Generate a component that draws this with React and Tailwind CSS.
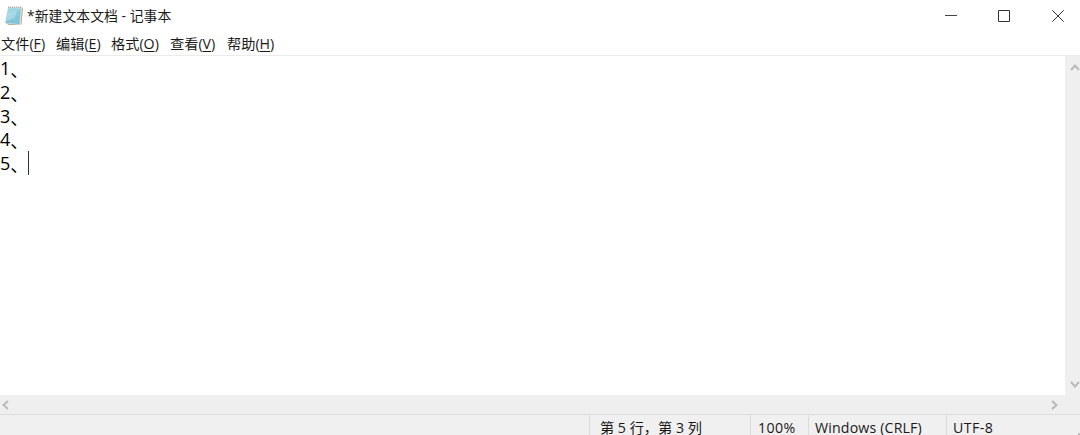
import React from 'react';

const menus = [
    { label: '文件', hotkey: 'F', width: 'w-[55px]' },
    { label: '编辑', hotkey: 'E', width: 'w-[55px]' },
    { label: '格式', hotkey: 'O', width: 'w-[59px]' },
    { label: '查看', hotkey: 'V', width: 'w-[57px]' },
    { label: '帮助', hotkey: 'H', width: 'w-[57px]' },
];

const lines = ['1', '2', '3', '4', '5'];

const NotepadIcon = () => (
    <svg width="20" height="22" viewBox="0 0 20 22" fill="none" className="shrink-0">
        <defs>
            <linearGradient id="cover" x1="4" y1="3" x2="14" y2="19" gradientUnits="userSpaceOnUse">
                <stop stopColor="#a9dbe8" />
                <stop offset="0.5" stopColor="#8bcade" />
                <stop offset="1" stopColor="#7dbdd2" />
            </linearGradient>
        </defs>
        <path d="M17.5 2.5L19 3L17.5 19.5L5 20L2 18.5Z" fill="#b9a78a" />
        <path d="M4 2L18 2.5L16.5 19.5L2 18.5Z" fill="#e4e8e4" />
        <path d="M4 3L17 3.5L15.4 19L1.2 18Z" fill="url(#cover)" />
        <path d="M4 8L13 5L11 13L2 16Z" fill="#c3e9f1" opacity="0.45" />
        <path d="M4.2 2.3H18" stroke="#9ba3a1" strokeWidth="1.4" strokeDasharray="1 1" />
    </svg>
);

const Chevron = ({ d, width, height }) => (
    <svg width={width} height={height} viewBox={`0 0 ${width} ${height}`} fill="none" className="block shrink-0">
        <path d={d} stroke="#b9b9b9" strokeWidth="2" />
    </svg>
);

const TitleBar = () => (
    <header className="flex h-8 shrink-0 items-center justify-between pl-1">
        <div className="flex items-center gap-[3px]">
            <NotepadIcon />
            <h1 className="whitespace-pre text-[13.9px] leading-5">*新建文本文档 - 记事本</h1>
        </div>
        <div className="flex h-full items-center">
            <button aria-label="最小化" className="w-[53px]">
                <svg width="12" height="12" viewBox="0 0 12 12"><path d="M0 5.5H12" stroke="#444" /></svg>
            </button>
            <button aria-label="最大化" className="w-[54px]">
                <svg width="12" height="12" viewBox="0 0 12 12"><path d="M0.5 0.5H11.5V11.5H0.5Z" stroke="#333" fill="none" /></svg>
            </button>
            <button aria-label="关闭" className="w-7">
                <svg width="12" height="12" viewBox="0 0 12 12"><path d="M0.3 0.3L11.7 11.7M11.7 0.3L0.3 11.7" stroke="#333" /></svg>
            </button>
        </div>
    </header>
);

const MenuBar = () => (
    <nav className="flex h-6 shrink-0 items-center border-b border-[#ebebeb] pl-px text-[14.2px] leading-5">
        {menus.map(({ label, hotkey, width }) => (
            <span key={hotkey} className={`shrink-0 whitespace-nowrap ${width}`}>
                {label}(<span className="underline underline-offset-2">{hotkey}</span>)
            </span>
        ))}
    </nav>
);

const Editor = () => (
    <div className="flex min-h-0 flex-1">
        <main className="flex-1 pt-px text-[18px] leading-[23.8px] text-black">
            {lines.map((line, index) => (
                <div key={line} className="flex h-[23.8px] items-start">
                    <span>{line}</span>
                    <span className="pt-0.5">、</span>
                    {index === lines.length - 1 && <span className="-mt-px h-6 w-px bg-[#333]" />}
                </div>
            ))}
        </main>
        <div className="flex w-[15px] flex-col items-end justify-between bg-[#efefef] pb-[6px] pt-[7px]">
            <Chevron d="M1 7L5 2.5L9 7" width={10} height={9} />
            <Chevron d="M1 2L5 6.5L9 2" width={10} height={9} />
        </div>
    </div>
);

const StatusBar = () => (
    <footer className="flex h-[21px] shrink-0 border-t border-[#dcdcdc] bg-[#f0f0f0] text-[14.2px] leading-[14px] *:pt-[6px]">
        <div className="w-[590px] border-r border-[#dcdcdc]" />
        <div className="w-[161px] whitespace-pre border-r border-[#dcdcdc] pl-[10px]">第 5 行，第 3 列</div>
        <div className="w-[58px] border-r border-[#dcdcdc] pl-[7px] tracking-[0.4px]">100%</div>
        <div className="w-[138px] whitespace-nowrap border-r border-[#dcdcdc] pl-[6px] tracking-[0.15px]">Windows (CRLF)</div>
        <div className="flex-1 pl-[6px] tracking-[0.4px]">UTF-8</div>
        <svg width="3" height="3" viewBox="0 0 3 3" className="self-end !pt-0">
            <path d="M1 1H3V3H1Z" fill="#bfbfbf" />
        </svg>
    </footer>
);

export default function App() {
    return (
        <div className="flex h-[435px] w-[1080px] flex-col overflow-hidden bg-white font-['Open_Sans','Noto_Sans_CJK_SC',sans-serif] text-[#1a1a1a]">
            <TitleBar />
            <MenuBar />
            <Editor />
            <div className="flex h-[19px] shrink-0 items-center justify-between bg-[#efefef] pl-px pr-[21px]">
                <Chevron d="M7 1L2.5 5L7 9" width={9} height={10} />
                <Chevron d="M2 1L6.5 5L2 9" width={9} height={10} />
            </div>
            <StatusBar />
        </div>
    );
}
